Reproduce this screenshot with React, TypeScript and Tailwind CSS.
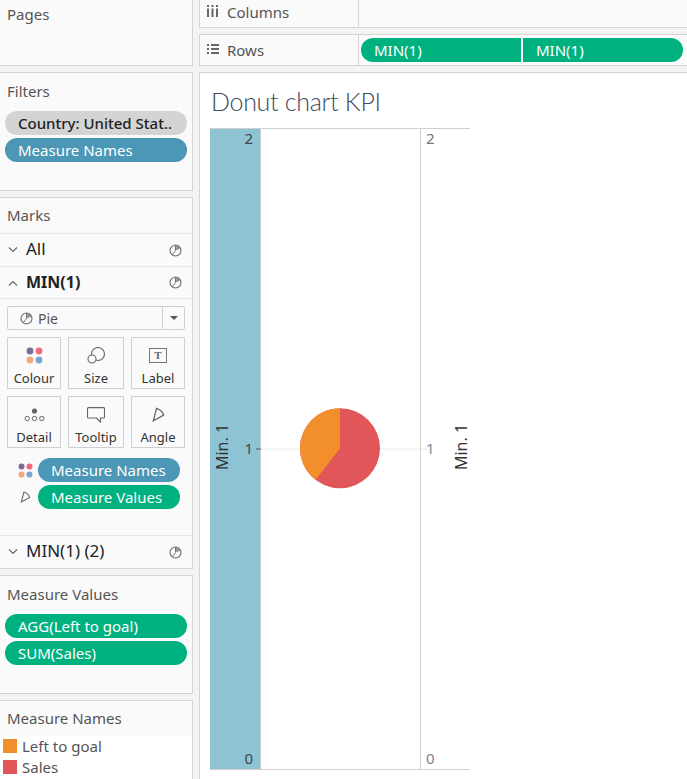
import React from 'react';

const font = "font-['Noto_Sans',sans-serif]";

const PieIcon: React.FC<{ className?: string }> = ({ className }) => (
  <svg viewBox="0 0 14 14" className={className} fill="none" stroke="#6e6e6e" strokeWidth="1.2">
    <path d="M7 7V1.2A5.8 5.8 0 0 1 12.4 5Z" fill="#9a9a9a" stroke="none" />
    <circle cx="7" cy="7" r="5.9" />
    <path d="M7 1.2V7L3.6 11.6" strokeWidth="1" />
  </svg>
);

const Chevron: React.FC<{ up?: boolean }> = ({ up }) => (
  <svg viewBox="0 0 10 6" className="w-[10px] h-[6px]" fill="none" stroke="#666" strokeWidth="1.1">
    <path d={up ? 'M1 5.5 5 1.5 9 5.5' : 'M1 .5 5 4.5 9 .5'} />
  </svg>
);

const Pill: React.FC<{ label: string; color: string; className?: string }> = ({ label, color, className }) => (
  <div className={`h-6 flex items-center rounded-full pl-[13px] text-[15px] leading-none whitespace-nowrap overflow-hidden ${color} ${className ?? ''}`}>
    {label}
  </div>
);

const MarkRow: React.FC<{ label: string; up?: boolean; bold?: boolean; h: string; border?: boolean }> = ({ label, up, bold, h, border }) => (
  <div className={`${h} flex items-center pl-2 pr-[10px] ${border ? 'border-b border-[#e6e6e6]' : ''}`}>
    <Chevron up={up} />
    <span className={`ml-2 mb-[2px] text-[#222] ${bold ? 'text-[16px] font-bold' : 'text-[17px]'}`}>{label}</span>
    <PieIcon className="ml-auto w-[13px] h-[13px]" />
  </div>
);

const ColourDots: React.FC<{ className?: string }> = ({ className }) => (
  <svg viewBox="0 0 17 17" className={className}>
    <circle cx="4" cy="4" r="3.4" fill="#7c6a99" />
    <circle cx="13" cy="4" r="3.4" fill="#f0697f" />
    <circle cx="4" cy="13" r="3.4" fill="#f2a77c" />
    <circle cx="13" cy="13" r="3.4" fill="#7fa3d1" />
  </svg>
);

const AngleIcon: React.FC<{ className?: string }> = ({ className }) => (
  <svg viewBox="0 0 12 14" className={className} fill="none" stroke="#666" strokeWidth="1.2">
    <path d="M1.2 12.8 4.2 1.2Q9.5 3 10.8 7.6Z" />
  </svg>
);

const MarkButton: React.FC<{ label: string; w: string; icon: React.ReactNode }> = ({ label, w, icon }) => (
  <div className={`${w} h-[52px] flex flex-col items-center border border-[#cfcfcf] bg-[#fafafa]`}>
    <div className="h-[32px] flex items-center justify-center pt-[3px]">{icon}</div>
    <span className="text-[13px] leading-[17px] text-[#333]">{label}</span>
  </div>
);

const PageTitle: React.FC<{ label: string }> = ({ label }) => (
  <div className="pl-[7px] text-[15px] leading-[18px] text-[#555]">{label}</div>
);

const DonutChart: React.FC = () => (
  <svg width="270" height="642" viewBox="0 0 270 642" className="block" style={{ fontFamily: '"Noto Sans", sans-serif' }}>
    <rect x="0" y="0" width="50" height="641" fill="#8dc3d2" />
    <path d="M0 .5H260M0 641.5H260" stroke="#cfcfcf" />
    <path d="M50.5 0V641M210.5 0V641" stroke="#cfcfcf" />
    <path d="M50 321H210" stroke="#ececec" />
    <path d="M46 321H51" stroke="#555" />
    <path d="M211 321H216" stroke="#ececec" />
    <circle cx="130" cy="320.3" r="40" fill="#e15759" />
    <path d="M130 320.3V280.3A40 40 0 0 0 105.5 351.9Z" fill="#f28e2b" />
    <g fontSize="15">
      <text x="43" y="16" textAnchor="end" fill="#444">2</text>
      <text x="43" y="326" textAnchor="end" fill="#444">1</text>
      <text x="43" y="636" textAnchor="end" fill="#444">0</text>
      <text x="216" y="16" fill="#777">2</text>
      <text x="216" y="326" fill="#6f8fa3">1</text>
      <text x="216" y="636" fill="#8a7a99">0</text>
    </g>
    <g fontSize="16">
      <text transform="translate(18 319) rotate(-90)" textAnchor="middle" fill="#333">Min. 1</text>
      <text transform="translate(257 319) rotate(-90)" textAnchor="middle" fill="#333">Min. 1</text>
    </g>
  </svg>
);

export default function App() {
  return (
    <div className={`${font} w-[687px] h-[779px] overflow-hidden flex bg-[#f3f3f3]`}>
      <aside className="w-[193px] shrink-0 flex flex-col gap-[6px]">
        <section className="h-[66px] pt-[5px] bg-[#fafafa] border-b border-r border-[#d4d4d4]">
          <PageTitle label="Pages" />
        </section>

        <section className="h-[119px] pt-[9px] bg-[#fafafa] border-y border-r border-[#d4d4d4]">
          <PageTitle label="Filters" />
          <div className="mt-[11px] ml-[5px] w-[182px] flex flex-col gap-[3px]">
            <Pill label="Country: United Stat.." color="bg-[#d4d4d4] text-[#222] font-medium" />
            <Pill label="Measure Names" color="bg-[#4b97b5] text-white" />
          </div>
        </section>

        <section className="h-[372px] flex flex-col bg-[#fafafa] border-y border-r border-[#d4d4d4]">
          <div className="h-[36px] pt-[8px] border-b border-[#e6e6e6]">
            <PageTitle label="Marks" />
          </div>
          <MarkRow label="All" h="h-[33px]" border />
          <MarkRow label="MIN(1)" up bold h="h-[32px]" border />
          <div className="ml-[7px] mt-[7px] w-[178px] h-[24px] flex items-center border border-[#cfcfcf] rounded-[2px] bg-[#fafafa]">
            <PieIcon className="ml-[12px] w-[13px] h-[13px]" />
            <span className="ml-[5px] text-[14px] text-[#555]">Pie</span>
            <div className="ml-auto h-full w-[22px] flex items-center justify-center border-l border-[#cfcfcf]">
              <div className="w-0 h-0 border-x-[4px] border-x-transparent border-t-[4px] border-t-[#555]" />
            </div>
          </div>
          <div className="ml-[7px] mt-[7px] flex flex-col gap-[7px]">
            <div className="flex gap-[7px]">
              <MarkButton label="Colour" w="w-[54px]" icon={<ColourDots className="w-[17px] h-[17px]" />} />
              <MarkButton label="Size" w="w-[56px]" icon={
                <svg viewBox="0 0 19 17" className="w-[19px] h-[17px]" fill="none" stroke="#666" strokeWidth="1.1">
                  <circle cx="11" cy="7" r="6.5" fill="#fafafa" />
                  <circle cx="5" cy="12" r="4" fill="#fafafa" />
                </svg>
              } />
              <MarkButton label="Label" w="w-[54px]" icon={
                <div className="w-[18px] h-[15px] flex items-center justify-center border-[1.5px] border-[#777] font-['Liberation_Serif',serif] font-bold text-[11px] leading-none text-[#666]">T</div>
              } />
            </div>
            <div className="flex gap-[7px]">
              <MarkButton label="Detail" w="w-[54px]" icon={
                <svg viewBox="0 0 21 14" className="w-[21px] h-[14px]" fill="none" stroke="#666">
                  <circle cx="10.5" cy="3" r="2.6" fill="#666" stroke="none" />
                  <circle cx="3.2" cy="10.5" r="2.2" />
                  <circle cx="10.5" cy="10.5" r="2.2" />
                  <circle cx="17.8" cy="10.5" r="2.2" />
                </svg>
              } />
              <MarkButton label="Tooltip" w="w-[56px]" icon={
                <svg viewBox="0 0 18 16" className="w-[18px] h-[16px]" fill="none" stroke="#666" strokeWidth="1.1">
                  <path d="M1.5.6H16.5a1 1 0 0 1 1 1V10a1 1 0 0 1-1 1H13.5V15L9.5 11H1.5a1 1 0 0 1-1-1V1.6a1 1 0 0 1 1-1Z" />
                </svg>
              } />
              <MarkButton label="Angle" w="w-[54px]" icon={<AngleIcon className="w-[13px] h-[15px]" />} />
            </div>
          </div>
          <div className="mt-[10px] flex flex-col gap-[3px]">
            <div className="flex items-center">
              <ColourDots className="ml-[18px] w-[15px] h-[15px]" />
              <Pill label="Measure Names" color="bg-[#4b97b5] text-white" className="ml-[5px] w-[142px]" />
            </div>
            <div className="flex items-center">
              <AngleIcon className="ml-[20px] w-[11px] h-[12px]" />
              <Pill label="Measure Values" color="bg-[#00b180] text-white" className="ml-[7px] w-[142px]" />
            </div>
          </div>
          <div className="mt-auto border-t border-[#e6e6e6]">
            <MarkRow label="MIN(1) (2)" h="h-[32px]" />
          </div>
        </section>

        <section className="h-[119px] pt-[9px] bg-[#fafafa] border-y border-r border-[#d4d4d4]">
          <PageTitle label="Measure Values" />
          <div className="mt-[11px] ml-[5px] w-[182px] flex flex-col gap-[3px]">
            <Pill label="AGG(Left to goal)" color="bg-[#00b180] text-white" />
            <Pill label="SUM(Sales)" color="bg-[#00b180] text-white" />
          </div>
        </section>

        <section className="flex-1 flex flex-col bg-[#fafafa] border-t border-r border-[#d4d4d4]">
          <div className="h-[35px] pt-[8px]">
            <PageTitle label="Measure Names" />
          </div>
          <div className="flex-1 bg-white pt-[3px] pl-[3px] flex flex-col gap-[7px]">
            <div className="flex items-center h-[14px] gap-[5px] text-[15px] text-[#555]">
              <div className="w-[14px] h-[14px] bg-[#f28e2b]" />
              Left to goal
            </div>
            <div className="flex items-center h-[14px] gap-[5px] text-[15px] text-[#555]">
              <div className="w-[14px] h-[14px] bg-[#e15759]" />
              Sales
            </div>
          </div>
        </section>
      </aside>

      <main className="ml-[6px] flex-1 flex flex-col gap-[6px]">
        <div className="h-[28px] flex bg-[#fafafa] border-b border-l border-[#d4d4d4]">
          <div className="w-[159px] flex items-center border-r border-[#d4d4d4] pl-[7px]">
            <svg viewBox="0 0 11 12" className="w-[11px] h-[12px] mb-[5px]" fill="#666">
              <path d="M0 0h2v2H0zM4.500 0h2v2h-2zM9 0h2v2H9zM0 3.500h2V12H0zM4.500 3.500h2V12h-2zM9 3.500h2V12H9z" />
            </svg>
            <span className="ml-[9px] mb-[3px] text-[15px] text-[#555]">Columns</span>
          </div>
        </div>
        <div className="h-[32px] flex bg-[#fafafa] border-y border-l border-[#d4d4d4]">
          <div className="w-[159px] flex items-center border-r border-[#d4d4d4] pl-[7px]">
            <svg viewBox="0 0 12 10" className="w-[12px] h-[10px] mb-[2px]" fill="#666">
              <path d="M0 0h2v2H0zM4 0h8v2H4zM0 4h2v2H0zM4 4h8v2H4zM0 8h2v2H0zM4 8h8v2H4z" />
            </svg>
            <span className="ml-[8px] text-[15px] text-[#555]">Rows</span>
          </div>
          <div className="flex-1 flex items-center pl-[2px] pr-[4px] gap-[2px]">
            <div className="w-[160px] h-6 flex items-center pl-[13px] rounded-l-full bg-[#00b180] text-white text-[15px]">MIN(1)</div>
            <div className="w-[160px] h-6 flex items-center pl-[13px] rounded-r-full bg-[#00b180] text-white text-[15px]">MIN(1)</div>
          </div>
        </div>
        <div className="flex-1 bg-white border-t border-l border-[#d4d4d4] pl-[10px]">
          <h1 className="h-[55px] pl-[1px] pt-[10px] font-['Lato',sans-serif] text-[25px] tracking-[-0.3px] leading-[36px] font-light text-[#3f4a5a]">Donut chart KPI</h1>
          <DonutChart />
        </div>
      </main>
    </div>
  );
}
